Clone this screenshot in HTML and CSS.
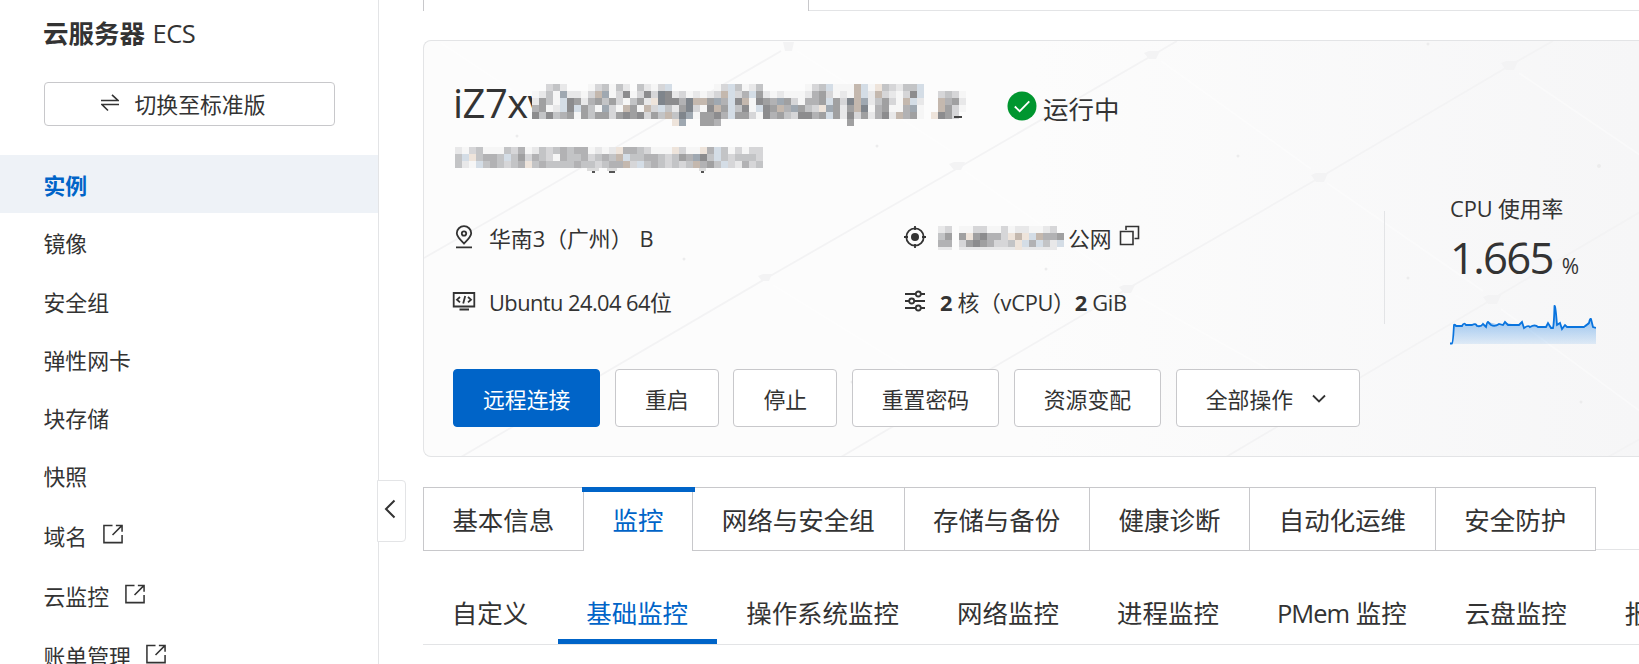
FILE: index.html
```
<!DOCTYPE html>
<html lang="zh-CN">
<head>
  <meta charset="UTF-8" />
  <title>云服务器 ECS</title>
  <link rel="stylesheet" href="styles.css">
</head>
<body>
  <svg width="0" height="0" class="defs">
    <symbol id="i-external" viewBox="0 0 22 22">
      <path d="M10.500 1.500H1.500V19.500H20.500V11.500M14 1.500H20.500V8M20 2L10.500 11.500" />
    </symbol>
  </svg>

  <aside class="sidebar">
    <h1 class="produto">云服务器 <span>ECS</span></h1>
    <button class="switch">
      <svg width="18" height="18" viewBox="0 0 18 18"><path d="M0 6.500H17L11 .8M18 10.500H1L7 16.500" /></svg>
      <span>切换至标准版</span>
    </button>
    <nav class="menu">
      <a class="active">实例</a>
      <a>镜像</a>
      <a>安全组</a>
      <a>弹性网卡</a>
      <a>块存储</a>
      <a>快照</a>
      <a class="ext">域名<svg><use href="#i-external" /></svg></a>
      <a class="ext">云监控<svg><use href="#i-external" /></svg></a>
      <a class="ext">账单管理<svg><use href="#i-external" /></svg></a>
    </nav>
    <div class="collapse">
      <svg width="12" height="20" viewBox="0 0 12 20"><path d="M10.500 1.500L2 10L10.500 18.500" /></svg>
    </div>
  </aside>

  <main>
    <div class="top-tabs"><div class="top-tab"></div><div class="top-line"></div></div>

    <section class="card">
      <svg class="pattern" width="1216" height="416" viewBox="423 40 1216 416">
        <g class="dark">
          <path d="M423 257L540 190L780 50" />
          <path d="M460 456L764 278L957 167L1152 54L1176 40" />
          <path d="M840 456L1126 288L1318 177L1508 65L1552 40" />
          <path d="M1225 456L1490 299L1639 211" />
          <path d="M1607 456L1639 438" />
        </g>
        <g class="light">
          <path d="M440 42L550 115M796 50L950 150M964 170L1120 280M1134 294L1360 420M772 284L960 400M1160 60L1310 168M1326 182L1482 290M1518 72L1639 154M1500 308L1639 410" />
        </g>
        <g class="nodes">
          <path d="M782 41h11l-2 9h-7zM757 275l5-2h9l-3 7h-7zM948 163l5-2h11l-4 8h-7zM1143 52l5-2h11l-4 8h-7zM1118 286l5-2h11l-4 8h-7zM1310 174l5-2h12l-4 9h-8zM1500 62l5-2h12l-4 9h-8zM1482 296l5-2h13l-4 9h-9z" />
        </g>
        <g class="dots">
          <circle cx="516" cy="135" r="1.500" /><circle cx="683" cy="258" r="1.500" />
          <circle cx="876" cy="145" r="1.500" /><circle cx="1045" cy="268" r="1.500" />
          <circle cx="1237" cy="155" r="1.500" /><circle cx="1427" cy="43" r="1.500" />
          <circle cx="1598" cy="165" r="2" /><circle cx="1407" cy="277" r="1.500" />
          <circle cx="1580" cy="401" r="1.500" /><circle cx="851" cy="381" r="1.500" />
        </g>
      </svg>

      <div class="overview">
        <div class="info">
          <div class="headline">
            <h2>iZ7xv<svg class="mosaic" id="m-name" width="434" height="42"></svg></h2>
            <div class="status">
              <svg width="30" height="30" viewBox="0 0 30 30"><circle cx="15" cy="15" r="14.500" /><path d="M7.800 15.500L12.700 20.200L22.300 10.300" /></svg>
              <span>运行中</span>
            </div>
          </div>
          <div class="instance-id"><svg id="m-id" width="315" height="26"></svg></div>

          <div class="specs">
            <div class="spec">
              <svg width="24" height="24" viewBox="0 0 24 24"><path d="M12 18.500C8 14.500 4.800 11.500 4.800 8.200A7.200 7 0 0 1 19.200 8.200C19.200 11.500 16 14.500 12 18.500ZM4 22.300H20" /><circle cx="12" cy="8.500" r="2.200" /></svg>
              <span>华南<span class="n">3</span>（广州）<span class="zone">B</span></span>
            </div>
            <div class="spec">
              <svg width="24" height="24" viewBox="0 0 24 24"><circle cx="12" cy="12" r="8.700" /><circle class="fill" cx="12" cy="12" r="4" /><path d="M12 1V5M12 19V23M1 12H5M19 12H23" /></svg>
              <span class="ip"><svg id="m-ip" width="132" height="24"></svg>公网<svg class="copy" width="21" height="21" viewBox="0 0 21 21"><path d="M1.500 6.500H14V19.500H1.500ZM7 5V1.500H19.500V13.500H15.500" /></svg></span>
            </div>
            <div class="spec">
              <svg width="24" height="24" viewBox="0 0 24 24"><path d="M1.700 4H22.300V17.500H1.700ZM7.500 20.500H17M8 8L5 10.700L8 13.400M16 8L19 10.700L16 13.400M13.200 7L11.200 14.500" /></svg>
              <span class="os">Ubuntu 24.04 64位</span>
            </div>
            <div class="spec">
              <svg width="24" height="24" viewBox="0 0 24 24"><path d="M2 5H12.500M18 5H22M2 12H6M11.500 12H22M2 19H12.500M18 19H22" /><circle cx="15.300" cy="5" r="2.500" /><circle cx="8.700" cy="12" r="2.500" /><circle cx="15.300" cy="19" r="2.500" /></svg>
              <span class="cpu"><b>2</b> 核（vCPU）<b>2</b> GiB</span>
            </div>
          </div>

          <div class="actions">
            <button class="btn primary">远程连接</button>
            <button class="btn">重启</button>
            <button class="btn">停止</button>
            <button class="btn">重置密码</button>
            <button class="btn">资源变配</button>
            <button class="btn">全部操作<svg width="14" height="10" viewBox="0 0 14 10"><path d="M1 1.500L7 7.500L13 1.500" /></svg></button>
          </div>
        </div>

        <div class="metric">
          <div class="label">CPU 使用率</div>
          <div class="value">1.665<small>%</small></div>
          <svg class="chart" width="146" height="42" viewBox="0 0 146 42">
            <defs>
              <linearGradient id="area" x1="0" y1="0" x2="0" y2="1">
                <stop offset="0.3" stop-color="#0070e0" stop-opacity=".4" />
                <stop offset="1" stop-color="#0070e0" stop-opacity=".1" />
              </linearGradient>
            </defs>
            <path fill="url(#area)" d="M3 40L5 21L12 22L15 20L25 21L36 22L38 18L50 21L56 19L68 21L72 18L74 24L86 22L96 24L98 19L103 24L105 2L107 21L110 19L112 25L115 21L119 23L135 24L138 20L141 15L143 23L146 24V40Z" />
            <path class="line" d="M0 39.500H2Q3 39 4 21Q5 20 6 22H12Q14 18 16 21H22Q26 19 27 22Q31 23 33 20L36 23Q37 18 38 18L41 21Q45 23 49 20L53 21L55 18L58 21H67L69 21L72 18L74 24Q78 21 80 23Q85 20 88 23H96L98 19L101 24H103Q104 20 104.500 2Q105.500 1 107 21L110 19L112 25L115 21L117 23H134Q138 20 139 19Q140 14 141 15L143 23L146 24" />
          </svg>
        </div>
      </div>
    </section>

    <div class="tabs">
      <a>基本信息</a>
      <a class="active">监控</a>
      <a>网络与安全组</a>
      <a>存储与备份</a>
      <a>健康诊断</a>
      <a>自动化运维</a>
      <a>安全防护</a>
      <i></i>
    </div>

    <div class="subtabs">
      <a>自定义</a>
      <a class="active">基础监控</a>
      <a>操作系统监控</a>
      <a>网络监控</a>
      <a>进程监控</a>
      <a><span class="pmem">PMem</span> 监控</a>
      <a>云盘监控</a>
      <a>报警</a>
    </div>
  </main>
  <script src="script.js"></script>
</body>
</html>
```
FILE: styles.css
```
:root {
  --azul: #0064c8;
  --texto: #333;
  --borda: #c8c8cb;
  --linha: #e3e4e6;
}

* {
  box-sizing: border-box;
}

body {
  margin: 0;
  height: 664px;
  display: flex;
  overflow: hidden;
  background: #fff;
  color: var(--texto);
  font-family: "Open Sans", "Noto Sans CJK SC", sans-serif;
  font-size: 21.84px;
  line-height: 32px;
  white-space: nowrap;
}

svg {
  display: block;
  flex: none;
  fill: none;
  stroke: var(--texto);
  stroke-width: 1.8;
}

.defs {
  position: absolute;
}

button {
  font: inherit;
  color: inherit;
  background: #fff;
  border: 1px solid var(--borda);
  border-radius: 4px;
  display: flex;
  align-items: center;
  justify-content: center;
}

/* sidebar */
.sidebar {
  position: relative;
  flex: none;
  width: 379px;
  border-right: 1px solid var(--linha);
}

.produto {
  margin: 0;
  padding: 16px 0 0 43px;
  height: 82px;
  font-size: 25.48px;
  font-weight: 700;
  line-height: 34px;
}

.produto span {
  font-weight: 400;
  letter-spacing: -0.5px;
  margin-left: 1px;
}

.switch {
  width: 291px;
  height: 44px;
  margin: 0 0 29px 44px;
  padding: 2px 13px 0 0;
  gap: 16px;
}

.switch svg {
  stroke-width: 1.6;
  margin-top: -4px;
}

.menu a {
  display: flex;
  align-items: center;
  height: 58.24px;
  padding: 4px 0 0 43.5px;
}

.menu .active {
  background: #eef2f7;
  color: var(--azul);
  font-weight: 700;
}

.menu .ext {
  height: 60.3px;
}

.menu svg {
  width: 22px;
  height: 21px;
  margin: -5px 0 0 14.5px;
  stroke-width: 1.6;
}

.collapse {
  position: absolute;
  left: 377px;
  top: 480px;
  width: 29px;
  height: 62px;
  padding: 18px 0 0 6px;
  background: #fff;
  border: 1px solid var(--linha);
  border-radius: 0 4px 4px 0;
}

.collapse svg {
  stroke-width: 2;
}

/* content */
main {
  flex: 1;
  min-width: 0;
  padding-left: 44px;
}

.top-tabs {
  display: flex;
  height: 11px;
  margin-bottom: 29px;
}

.top-tab {
  width: 386px;
  border: solid var(--borda);
  border-width: 0 1px;
}

.top-line {
  flex: 1;
  border-bottom: 1px solid var(--linha);
}

.card {
  position: relative;
  height: 417px;
  border: 1px solid var(--linha);
  border-right: 0;
  border-radius: 8px 0 0 8px;
  background: linear-gradient(90deg, #fcfcfc 50%, #f6f6f7);
  overflow: hidden;
}

.pattern {
  position: absolute;
  left: 0;
  top: 0;
}

.pattern .dark {
  stroke: #f3f3f4;
}

.pattern .light {
  stroke: #fff;
  stroke-opacity: 0.35;
}

.pattern .nodes {
  stroke: none;
  fill: #f3f3f4;
}

.pattern .dots {
  stroke: none;
  fill: #ececed;
}

.overview {
  position: relative;
  display: flex;
  height: 100%;
  padding-left: 29px;
}

.info {
  width: 931px;
}

.headline {
  display: flex;
  height: 106px;
  padding-top: 36px;
}

h2 {
  position: relative;
  margin: 0;
  width: 553.5px;
  font-size: 40px;
  font-weight: 400;
  line-height: 52px;
  letter-spacing: -0.5px;
}

.mosaic {
  position: absolute;
  left: 79px;
  top: 7px;
}

#m-name,
#m-id,
#m-ip {
  stroke: none;
  shape-rendering: crispEdges;
}

.status {
  display: flex;
  gap: 6.5px;
  font-size: 25.48px;
  padding-top: 14px;
}

.status circle {
  fill: #00962f;
  stroke: none;
}

.status path {
  stroke: #fff;
  stroke-width: 1.8;
}

.status span {
  margin-top: 2px;
}

.instance-id {
  height: 60px;
  padding-left: 2px;
}

.specs {
  display: grid;
  grid-template-columns: 451px 1fr;
  grid-template-rows: 64px 64px;
}

.spec {
  display: flex;
  align-items: center;
  gap: 13px;
}

.spec > svg {
  margin: -4px 0 0 -1px;
}

.spec .fill {
  fill: var(--texto);
  stroke: none;
}

.zone {
  margin-left: 7px;
}

.os {
  letter-spacing: -0.55px;
}

.cpu {
  letter-spacing: -0.3px;
}

.ip {
  display: flex;
}

.ip > svg {
  margin: 3px 0 0 -2px;
}

.ip > svg:first-child {
  margin-right: -2px;
}

.ip > .copy {
  margin: 2px 0 0 7px;
  stroke-width: 1.6;
}

.actions {
  display: flex;
  gap: 14.7px;
  margin-top: 34px;
}

.btn {
  height: 58px;
  padding: 4px 29px 0;
}

.btn svg {
  margin: -3px 4px 0 19px;
}

.primary {
  background: var(--azul);
  border-color: var(--azul);
  color: #fff;
}

.metric {
  position: relative;
  height: 113px;
  margin-top: 170px;
  padding-left: 65px;
  border-left: 1px solid var(--linha);
}

.metric .label {
  margin-top: -18px;
  letter-spacing: -0.1px;
}

.metric .value {
  font-size: 43.68px;
  line-height: 64px;
  letter-spacing: -1.7px;
}

.metric small {
  font-size: 21px;
  margin-left: 9px;
}

.chart {
  margin-top: 6px;
}

.chart path {
  stroke: none;
}

.chart .line {
  stroke: #0a74de;
  stroke-width: 1.8;
}

/* tabs */
.tabs {
  display: flex;
  height: 64px;
  margin-top: 30px;
  font-size: 25.48px;
}

.tabs a {
  height: 64px;
  padding: 16px 28.9px 0 28.4px;
  border: 1px solid var(--borda);
  border-right-width: 0;
}

.tabs a:nth-last-child(2) {
  border-right-width: 1px;
}

.tabs .active {
  position: relative;
  color: var(--azul);
  border-bottom: 0;
}

.tabs .active::before {
  content: "";
  position: absolute;
  left: -2px;
  right: -3px;
  top: -1px;
  height: 5px;
  background: var(--azul);
}

.tabs i {
  flex: 1;
  height: 63px;
  border-bottom: 1px solid var(--linha);
}

.subtabs {
  display: flex;
  height: 66px;
  margin-top: 28px;
  font-size: 25.48px;
  border-bottom: 1px solid var(--linha);
}

.subtabs a {
  height: 65px;
  padding: 18px 29.4px 0 28.7px;
}

.subtabs .active {
  color: var(--azul);
  border-bottom: 5px solid var(--azul);
}

.pmem {
  letter-spacing: -1px;
}
```
FILE: script.js
```
// masked values, one character per 7px cell
const tons = {
  1: "#8c8c8e", 2: "#a0a0a1", 3: "#b2b2b4", 4: "#c3c4c6", 5: "#d6d6d8", 6: "#e8e8e9", 7: "#f6f6f6",
  a: "#c4b8ae", b: "#d4dde6", c: "#eee4db", d: "#7f858c", e: "#9fa8b1"
};

function mosaico(id, linhas, extra = "") {
  let rects = "";
  linhas.forEach((linha, y) => {
    [...linha].forEach((c, x) => {
      if (tons[c]) rects += `<rect x="${x * 7}" y="${y * 7}" width="7" height="7" fill="${tons[c]}"/>`;
    });
  });
  document.getElementById(id).innerHTML = rects + extra;
}

mosaico("m-name", [
  "..546...754746.4675b......75b4764......754b777ab7c45644b......",
  "7647e6675ae7517515d16576765ab53b26767776325767ab6a56751b..5457",
  "6247b126324257426cd113daa2e3b1a7123e257332b25dae64257ab6..a326",
  "3276b1b247e57a27a5b462d571a2b417b12a3e245ce262ad732773e7..a257",
  "1414327242252121524a4de72213b2257132451132b261526316a327.c125.",
  "....................ce..223..................2................"
], '<path fill="#444" d="M422 32h8v2h-8z"/>');

mosaico("m-id", [
  "67547774537645434337676c3345777c577c3b475755",
  "4bc4334b425345734435434ab443345423e14b454445",
  "467b434543c4344443445433a5b4345454a324b56354"
], '<path fill="#ddd" d="M132 21h12v3h-12zM152 21h10v3h-10zM244 21h7v3h-7z"/><path fill="#555" d="M137 24h3v2h-3zM154 24h6v2h-6zM246 24h3v2h-3z"/>');

mosaico("m-ip", [
  "65.77557757667765.",
  "42.2c21335cacba332",
  "33.52123554cb3b46b",
  "66.66666666c66666."
]);
```
